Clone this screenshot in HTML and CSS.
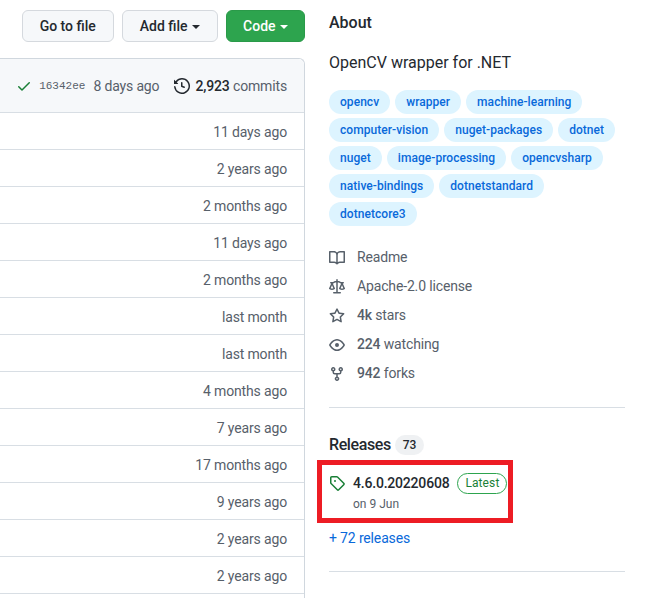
FILE: index.html
```html
<!DOCTYPE html>
<html lang="en">
<head>
    <meta charset="UTF-8">
    <meta name="viewport" content="width=device-width, initial-scale=1.0">
    <title>OpenCV wrapper for .NET</title>
    <link rel="stylesheet" href="styles.css">
</head>
<body>
    <div class="page">
        <!-- file list side -->
        <div class="main">
            <div class="actions">
                <button class="btn">Go to file</button>
                <button class="btn">Add file <span class="caret"></span></button>
                <button class="btn btn-green">Code <span class="caret"></span></button>
            </div>
            <div class="files">
                <div class="commit-bar">
                    <svg class="icon check" viewBox="0 0 16 16"><path d="M13.78 4.22a.75.75 0 010 1.06l-7.25 7.25a.75.75 0 01-1.06 0L2.22 9.28a.75.75 0 011.06-1.06L6 10.94l6.72-6.72a.75.75 0 011.06 0z"/></svg>
                    <span class="sha">16342ee</span>
                    <span class="commit-age">8 days ago</span>
                    <svg class="icon history" viewBox="0 0 16 16"><path d="M1.643 3.143L.427 1.927A.25.25 0 000 2.104V5.75c0 .138.112.25.25.25h3.646a.25.25 0 00.177-.427L2.715 4.215a6.5 6.5 0 11-1.18 4.458.75.75 0 10-1.493.154 8.001 8.001 0 101.6-5.684zM7.75 4a.75.75 0 01.75.75v2.992l2.028.812a.75.75 0 01-.557 1.392l-2.5-1A.75.75 0 017 8.25v-3.5A.75.75 0 017.75 4z"/></svg>
                    <span class="commits"><b>2,923</b> commits</span>
                </div>
                <div class="file-row">11 days ago</div>
                <div class="file-row">2 years ago</div>
                <div class="file-row">2 months ago</div>
                <div class="file-row">11 days ago</div>
                <div class="file-row">2 months ago</div>
                <div class="file-row">last month</div>
                <div class="file-row">last month</div>
                <div class="file-row">4 months ago</div>
                <div class="file-row">7 years ago</div>
                <div class="file-row">17 months ago</div>
                <div class="file-row">9 years ago</div>
                <div class="file-row">2 years ago</div>
                <div class="file-row">2 years ago</div>
                <div class="file-row file-row-cut"></div>
            </div>
        </div>

        <!-- about side -->
        <div class="side">
            <h2 class="about-title">About</h2>
            <p class="desc">OpenCV wrapper for .NET</p>
            <div class="topics">
                <a class="topic">opencv</a>
                <a class="topic">wrapper</a>
                <a class="topic">machine-learning</a>
                <a class="topic">computer-vision</a>
                <a class="topic">nuget-packages</a>
                <a class="topic">dotnet</a>
                <a class="topic">nuget</a>
                <a class="topic">image-processing</a>
                <a class="topic">opencvsharp</a>
                <a class="topic">native-bindings</a>
                <a class="topic">dotnetstandard</a>
                <a class="topic">dotnetcore3</a>
            </div>
            <ul class="meta">
                <li>
                    <svg class="icon" viewBox="0 0 16 16"><path d="M0 1.75A.75.75 0 01.75 1h4.253c1.227 0 2.317.59 3 1.501A3.744 3.744 0 0111.006 1h4.245a.75.75 0 01.75.75v10.5a.75.75 0 01-.75.75h-4.507a2.25 2.25 0 00-1.591.659l-.622.621a.75.75 0 01-1.06 0l-.622-.621A2.25 2.25 0 005.258 13H.75a.75.75 0 01-.75-.75V1.75zm8.755 3a2.25 2.25 0 012.25-2.25H14.5v9h-3.757c-.71 0-1.4.201-1.992.572l.004-7.322zm-1.504 7.324l.004-5.073-.002-2.253A2.25 2.25 0 005.003 2.5H1.5v9h3.757a3.75 3.75 0 011.994.574z"/></svg>
                    Readme
                </li>
                <li>
                    <svg class="icon" viewBox="0 0 16 16"><path d="M8.75.75a.75.75 0 00-1.5 0V2h-.984c-.305 0-.604.08-.869.23l-1.288.737A.25.25 0 013.984 3H1.75a.75.75 0 000 1.5h.428L.066 9.192a.75.75 0 00.154.838l.53-.53-.53.53v.001l.002.002.002.002.006.006.016.015.045.04a3.514 3.514 0 00.686.45A4.492 4.492 0 003 11c.88 0 1.556-.22 2.023-.454a3.515 3.515 0 00.686-.45l.045-.04.016-.015.006-.006.002-.002.001-.002L5.25 9.5l.53.53a.75.75 0 00.154-.838L3.822 4.5h.162c.305 0 .604-.08.869-.23l1.289-.737a.25.25 0 01.124-.033h.984V13h-2.5a.75.75 0 000 1.5h6.5a.75.75 0 000-1.5h-2.5V3.5h.984a.25.25 0 01.124.033l1.29.736c.264.152.563.231.868.231h.162l-2.112 4.692a.75.75 0 00.154.838l.53-.53-.53.53v.001l.002.002.002.002.006.006.016.015.045.04a3.517 3.517 0 00.686.45A4.492 4.492 0 0013 11c.88 0 1.556-.22 2.023-.454a3.512 3.512 0 00.686-.45l.045-.04.01-.01.006-.005.006-.006.002-.002.001-.002-.529-.531.53.53a.75.75 0 00.154-.838L13.823 4.5h.427a.75.75 0 000-1.5h-2.234a.25.25 0 01-.124-.033l-1.29-.736A1.75 1.75 0 009.735 2H8.75V.75zM1.695 9.227c.285.135.718.273 1.305.273s1.02-.138 1.305-.273L3 6.327l-1.305 2.9zm10 0c.285.135.718.273 1.305.273s1.02-.138 1.305-.273L13 6.327l-1.305 2.9z"/></svg>
                    Apache-2.0 license
                </li>
                <li>
                    <svg class="icon" viewBox="0 0 16 16"><path d="M8 .25a.75.75 0 01.673.418l1.882 3.815 4.21.612a.75.75 0 01.416 1.279l-3.046 2.97.719 4.192a.75.75 0 01-1.088.791L8 12.347l-3.766 1.98a.75.75 0 01-1.088-.79l.72-4.194L.818 6.374a.75.75 0 01.416-1.28l4.21-.611L7.327.668A.75.75 0 018 .25zm0 2.445L6.615 5.5a.75.75 0 01-.564.41l-3.097.45 2.24 2.184a.75.75 0 01.216.664l-.528 3.084 2.769-1.456a.75.75 0 01.698 0l2.77 1.456-.53-3.084a.75.75 0 01.216-.664l2.24-2.183-3.096-.45a.75.75 0 01-.564-.41L8 2.694v.001z"/></svg>
                    <span><b>4k</b> stars</span>
                </li>
                <li>
                    <svg class="icon" viewBox="0 0 16 16"><path d="M1.679 7.932c.412-.621 1.242-1.75 2.366-2.717C5.175 4.242 6.527 3.5 8 3.5c1.473 0 2.824.742 3.955 1.715 1.124.967 1.954 2.096 2.366 2.717a.119.119 0 010 .136c-.412.621-1.242 1.75-2.366 2.717C10.825 11.758 9.473 12.5 8 12.5c-1.473 0-2.824-.742-3.955-1.715C2.92 9.818 2.09 8.69 1.679 8.068a.119.119 0 010-.136zM8 2c-1.981 0-3.67.992-4.933 2.078C1.797 5.169.88 6.423.43 7.1a1.619 1.619 0 000 1.798c.45.678 1.367 1.932 2.637 3.024C4.329 13.008 6.019 14 8 14c1.981 0 3.67-.992 4.933-2.078 1.27-1.091 2.187-2.345 2.637-3.023a1.619 1.619 0 000-1.798c-.45-.678-1.367-1.932-2.637-3.023C11.671 2.992 9.981 2 8 2zm0 8a2 2 0 100-4 2 2 0 000 4z"/></svg>
                    <span><b>224</b> watching</span>
                </li>
                <li>
                    <svg class="icon" viewBox="0 0 16 16"><path d="M5 3.25a.75.75 0 11-1.5 0 .75.75 0 011.5 0zm0 2.122a2.25 2.25 0 10-1.5 0v.878A2.25 2.25 0 005.75 8.5h1.5v2.128a2.251 2.251 0 101.5 0V8.5h1.5a2.25 2.25 0 002.25-2.25v-.878a2.25 2.25 0 10-1.5 0v.878a.75.75 0 01-.75.75h-4.5A.75.75 0 015 6.25v-.878zm3.75 7.378a.75.75 0 11-1.5 0 .75.75 0 011.5 0zm3-8.75a.75.75 0 100-1.5.75.75 0 000 1.5z"/></svg>
                    <span><b>942</b> forks</span>
                </li>
            </ul>
            <div class="releases">
                <h2 class="releases-title">Releases <span class="counter">73</span></h2>
                <div class="release">
                    <svg class="icon tag" viewBox="0 0 16 16"><path d="M2.5 7.775V2.75a.25.25 0 01.25-.25h5.025a.25.25 0 01.177.073l6.25 6.25a.25.25 0 010 .354l-5.025 5.025a.25.25 0 01-.354 0l-6.25-6.25a.25.25 0 01-.073-.177zm-1.5 0V2.75C1 1.784 1.784 1 2.75 1h5.025c.464 0 .91.184 1.238.513l6.25 6.25a1.75 1.75 0 010 2.474l-5.026 5.026a1.75 1.75 0 01-2.474 0l-6.25-6.25A1.75 1.75 0 011 7.775zM6 5a1 1 0 100 2 1 1 0 000-2z"/></svg>
                    <div>
                        <div class="release-name"><b>4.6.0.20220608</b> <span class="latest">Latest</span></div>
                        <div class="release-date">on 9 Jun</div>
                    </div>
                </div>
                <a class="more">+ 72 releases</a>
            </div>
        </div>
    </div>
    <!-- red box on top of the screenshot -->
    <div class="highlight"></div>
</body>
</html>
```

FILE: styles.css
```css
html, body {
    margin: 0;
    height: 100%;
    overflow: hidden;
    background-color: #ffffff;
}

body {
    position: relative;
    font-family: Roboto, Arial, sans-serif;
    font-size: 14px;
    letter-spacing: -0.15px;
    color: #24292f;
}

b {
    font-weight: 500;
}

.page {
    display: flex;
    gap: 24px;
    width: 625px;
}

.main {
    width: 305px;
    flex-shrink: 0;
}

.side {
    width: 296px;
    flex-shrink: 0;
}

.icon {
    width: 16px;
    height: 16px;
    fill: #57606a;
    fill-rule: evenodd;
    flex-shrink: 0;
}

/* buttons */
.actions {
    display: flex;
    justify-content: flex-end;
    gap: 8px;
    padding-top: 10px;
    margin-bottom: 16px;
}

.btn {
    height: 32px;
    padding: 0 17px;
    font-family: inherit;
    font-size: 14px;
    font-weight: 500;
    color: #24292f;
    background-color: #f6f8fa;
    border: 1px solid #d5d9de;
    border-radius: 6px;
}

.btn-green {
    padding: 0 16px;
    color: #ffffff;
    background-color: #2da44e;
    border-color: #2a9a49;
}

.caret {
    display: inline-block;
    margin-left: 1px;
    vertical-align: middle;
    border-top: 4px solid currentColor;
    border-left: 4px solid transparent;
    border-right: 4px solid transparent;
}

/* file list */
.files {
    border: 1px solid #d0d7de;
    border-left: none;
    border-bottom: none;
    border-radius: 0 6px 0 0;
}

.commit-bar {
    display: flex;
    align-items: center;
    justify-content: flex-end;
    height: 53px;
    padding-right: 17px;
    background-color: #f6f8fa;
    border-radius: 0 6px 0 0;
    color: #57606a;
    white-space: nowrap;
}

.check {
    fill: #1a7f37;
}

.sha {
    margin-left: 7px;
    font-family: "Liberation Mono", monospace;
    font-size: 11px;
    letter-spacing: 0;
}

.commit-age {
    margin-left: 8px;
}

.history {
    margin-left: 15px;
    fill: #24292f;
}

.commits {
    margin-left: 5px;
}

.commits b {
    color: #24292f;
}

.file-row {
    height: 36px;
    line-height: 38px;
    padding-right: 17px;
    text-align: right;
    color: #57606a;
    border-top: 1px solid #d8dee4;
}

/* last row is cut off by the window */
.file-row-cut {
    height: 4px;
}

/* about */
.about-title {
    margin: 13px 0 0;
    font-size: 16px;
    line-height: 20px;
    font-weight: 500;
    letter-spacing: 0;
}

.desc {
    margin: 20px 0 0;
    font-size: 16px;
    line-height: 20px;
    letter-spacing: 0;
}

.topics {
    display: flex;
    flex-wrap: wrap;
    gap: 4px 5px;
    margin-top: 17px;
}

.topic {
    height: 24px;
    line-height: 24px;
    padding: 0 11px;
    font-size: 12px;
    font-weight: 500;
    letter-spacing: 0.05px;
    color: #0969da;
    background-color: #ddf4ff;
    border-radius: 12px;
}

.meta {
    list-style: none;
    margin: 16px 0 0;
    padding: 0 0 20px;
    color: #57606a;
    border-bottom: 1px solid #d8dee4;
}

.meta li {
    display: flex;
    align-items: center;
    gap: 12px;
    height: 29px;
}

.meta .icon {
    margin-top: 2px;
}

/* releases */
.releases {
    padding-bottom: 24px;
    border-bottom: 1px solid #d8dee4;
}

.releases-title {
    display: flex;
    align-items: center;
    gap: 4px;
    margin: 26px 0 0;
    font-size: 16px;
    line-height: 22px;
    font-weight: 500;
    letter-spacing: -0.4px;
}

.counter {
    min-width: 11px;
    padding: 0 8px;
    font-size: 12px;
    line-height: 20px;
    font-weight: 500;
    letter-spacing: 0;
    background-color: rgba(175,184,193,0.2);
    border-radius: 10px;
}

.release {
    display: flex;
    gap: 8px;
    margin-top: 16px;
}

.tag {
    margin-top: 3px;
    fill: #1a7f37;
}

.release-name {
    display: flex;
    align-items: center;
    gap: 8px;
    height: 22px;
}

.release-name b {
    letter-spacing: -0.2px;
}

.latest {
    height: 19px;
    line-height: 19px;
    padding: 0 7px;
    font-size: 12px;
    font-weight: 400;
    letter-spacing: 0.1px;
    color: #1a7f37;
    border: 1px solid #2da44e;
    border-radius: 11px;
}

.release-date {
    margin-top: 1px;
    font-size: 12px;
    line-height: 18px;
    letter-spacing: 0;
    color: #57606a;
}

.more {
    display: block;
    margin-top: 16px;
    font-size: 14px;
    line-height: 18px;
    color: #0969da;
}

.highlight {
    position: absolute;
    left: 317px;
    top: 460px;
    width: 186px;
    height: 53px;
    border: 5px solid #ed1c24;
}
```
